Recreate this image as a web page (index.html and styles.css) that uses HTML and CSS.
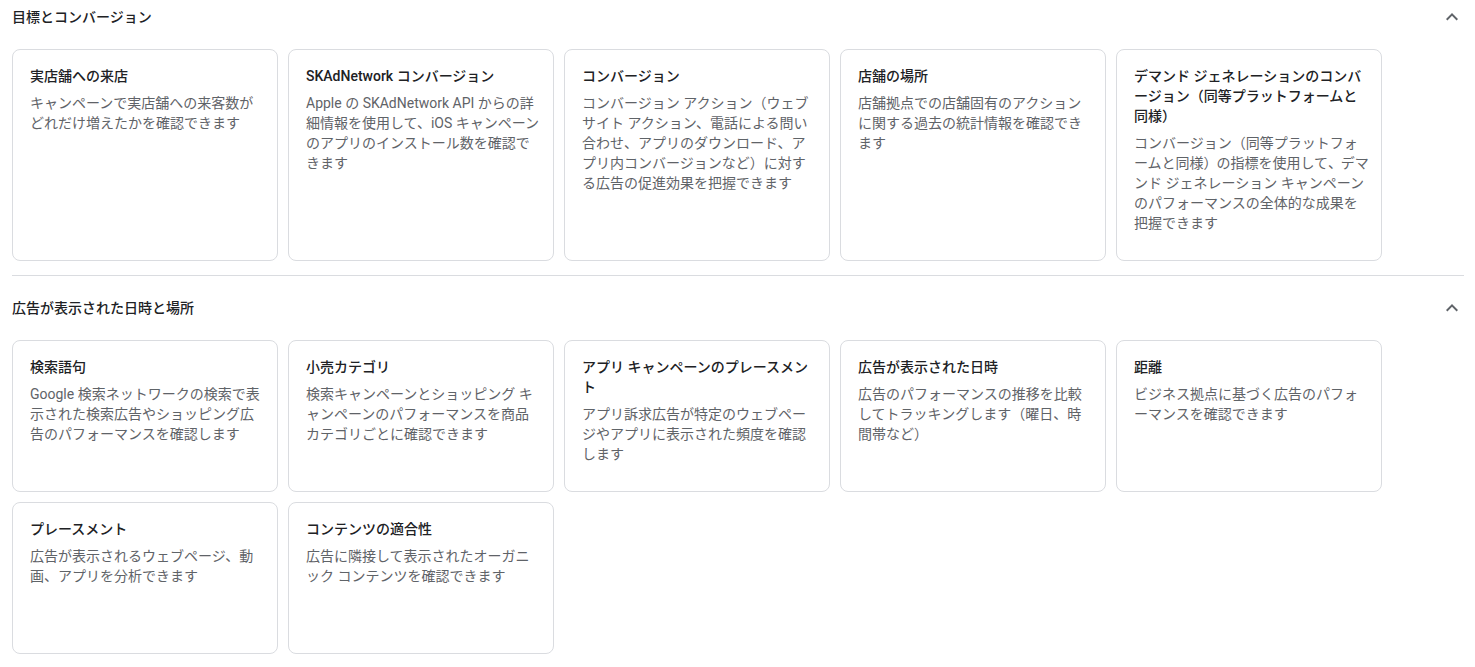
FILE: index.html
```html
<!DOCTYPE html>
<html lang="ja">
<head>
<meta charset="utf-8">
<link rel="stylesheet" href="styles.css">
</head>
<body>
<div class="page">
  <section class="section">
    <div class="section-header">
      <span class="section-title">目標とコンバージョン</span>
      <svg class="chevron" viewBox="0 0 24 24" width="24" height="24"><path d="M12 8l-6 6 1.41 1.41L12 10.83l4.59 4.58L18 14z"/></svg>
    </div>
    <div class="grid">
      <div class="card"><div class="card-title">実店舗への来店</div><div class="card-desc">キャンペーンで実店舗への来客数がどれだけ増えたかを確認できます</div></div>
      <div class="card"><div class="card-title">SKAdNetwork コンバージョン</div><div class="card-desc">Apple の SKAdNetwork API からの詳細情報を使用して、iOS キャンペーンのアプリのインストール数を確認できます</div></div>
      <div class="card"><div class="card-title">コンバージョン</div><div class="card-desc">コンバージョン アクション（ウェブサイト アクション、電話による問い合わせ、アプリのダウンロード、アプリ内コンバージョンなど）に対する広告の促進効果を把握できます</div></div>
      <div class="card"><div class="card-title">店舗の場所</div><div class="card-desc">店舗拠点での店舗固有のアクションに関する過去の統計情報を確認できます</div></div>
      <div class="card"><div class="card-title">デマンド ジェネレーションのコンバージョン（同等プラットフォームと同様）</div><div class="card-desc">コンバージョン（同等プラットフォームと同様<span class="pn">）</span>の指標を使用して<span class="pn">、</span>デマンド ジェネレーション キャンペーンのパフォーマンスの全体的な成果を把握できます</div></div>
    </div>
  </section>
  <div class="divider"></div>
  <section class="section">
    <div class="section-header">
      <span class="section-title">広告が表示された日時と場所</span>
      <svg class="chevron" viewBox="0 0 24 24" width="24" height="24"><path d="M12 8l-6 6 1.41 1.41L12 10.83l4.59 4.58L18 14z"/></svg>
    </div>
    <div class="grid">
      <div class="card"><div class="card-title">検索語句</div><div class="card-desc">Google 検索ネットワークの検索で表示された検索広告やショッピング広告のパフォーマンスを確認します</div></div>
      <div class="card"><div class="card-title">小売カテゴリ</div><div class="card-desc">検索キャンペーンとショッピング キャンペーンのパフォーマンスを商品カテゴリごとに確認できます</div></div>
      <div class="card"><div class="card-title">アプリ キャンペーンのプレースメント</div><div class="card-desc">アプリ訴求広告が特定のウェブページやアプリに表示された頻度を確認します</div></div>
      <div class="card"><div class="card-title">広告が表示された日時</div><div class="card-desc">広告のパフォーマンスの推移を比較してトラッキングします（曜日、時間帯など）</div></div>
      <div class="card"><div class="card-title">距離</div><div class="card-desc">ビジネス拠点に基づく広告のパフォーマンスを確認できます</div></div>
      <div class="card"><div class="card-title">プレースメント</div><div class="card-desc">広告が表示されるウェブページ、動画、アプリを分析できます</div></div>
      <div class="card"><div class="card-title">コンテンツの適合性</div><div class="card-desc">広告に隣接して表示されたオーガニック コンテンツを確認できます</div></div>
    </div>
  </section>
</div>
</body>
</html>
```
FILE: styles.css
```css
html, body {
  margin: 0;
  padding: 0;
  background: #ffffff;
}
body {
  font-family: Roboto, "Noto Sans CJK JP", sans-serif;
  font-size: 14px;
  color: #202124;
}
.page {
  width: 1452px;
  padding-left: 12px;
}
.section-header {
  height: 34px;
  display: flex;
  align-items: center;
  justify-content: space-between;
  margin-bottom: 15px;
}
.section-title {
  font-size: 14px;
  font-weight: 500;
  line-height: 20px;
  color: #202124;
}
.chevron {
  fill: #5f6368;
  display: block;
}
.grid {
  display: grid;
  grid-template-columns: repeat(5, 266px);
  gap: 10px;
}
.card {
  box-sizing: border-box;
  min-height: 152px;
  border: 1px solid #dadce0;
  border-radius: 8px;
  padding: 16px 12px 27px 17px;
}
.card-title {
  font-size: 14px;
  font-weight: 500;
  line-height: 20px;
  color: #202124;
}
.card-desc {
  margin-top: 7px;
  font-size: 14px;
  line-height: 20px;
  color: #5f6368;
}
.pn {
  letter-spacing: -1.2px;
}
.divider {
  height: 1px;
  background: #dadce0;
  margin-top: 14px;
  margin-bottom: 15px;
}
```
